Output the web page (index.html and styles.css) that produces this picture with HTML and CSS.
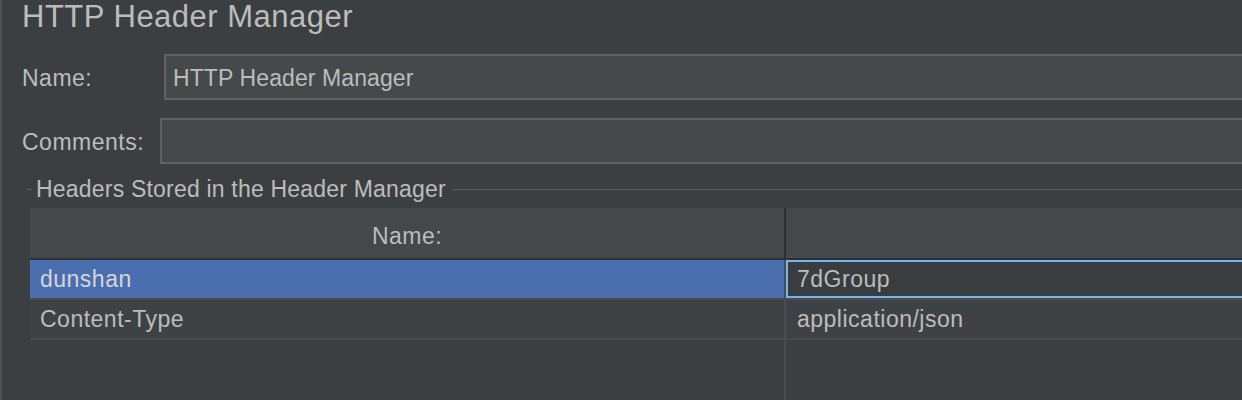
FILE: index.html
```html
<!DOCTYPE html>
<html>
<head>
<meta charset="utf-8">
<link rel="stylesheet" href="styles.css">
</head>
<body>
<div class="panel">
  <h1 class="title">HTTP Header Manager</h1>
  <div class="field-row name-row">
    <label class="label name-label">Name:</label>
    <div class="field">HTTP Header Manager</div>
  </div>
  <div class="field-row comments-row">
    <label class="label comments-label">Comments:</label>
    <div class="field"></div>
  </div>
  <div class="group">
    <div class="legend">
      <span class="dash"></span>
      <span class="legend-text">Headers Stored in the Header Manager</span>
      <span class="legend-line"></span>
    </div>
    <div class="table">
      <div class="thead">
        <div class="th">Name:</div>
        <div class="th-div"></div>
        <div class="th"></div>
      </div>
      <div class="tr selected">
        <div class="td sel">dunshan</div>
        <div class="vdiv"></div>
        <div class="td focus">7dGroup</div>
      </div>
      <div class="tr">
        <div class="td">Content-Type</div>
        <div class="vdiv"></div>
        <div class="td val">application/json</div>
      </div>
      <div class="filler">
        <div></div>
        <div class="vdiv"></div>
        <div></div>
      </div>
    </div>
  </div>
</div>
</body>
</html>
```
FILE: styles.css
```css
html, body {
  margin: 0;
  padding: 0;
  background: #3c3f41;
  overflow: hidden;
}
body {
  width: 1242px;
  height: 400px;
  font-family: "Liberation Sans", Arial, sans-serif;
  font-size: 23px;
  letter-spacing: 0.5px;
  color: #bcbcbc;
}
.panel {
  box-sizing: border-box;
  height: 400px;
  border-left: 2px solid #4e5052;
  padding-left: 20px;
  display: flex;
  flex-direction: column;
}
.title {
  margin: 0;
  font-weight: normal;
  font-size: 31px;
  letter-spacing: 0.5px;
  line-height: 34px;
  height: 34px;
  white-space: nowrap;
}
.field-row {
  display: flex;
  height: 46px;
}
.name-row { margin-top: 20px; }
.comments-row { margin-top: 18px; }
.label {
  padding-top: 2px;
  line-height: 44px;
  white-space: nowrap;
}
.name-label { width: 142px; flex: none; }
.comments-label { width: 138px; flex: none; }
.field {
  flex: 1;
  box-sizing: border-box;
  height: 46px;
  background: #45494a;
  border: 2px solid #5f6162;
  border-right: none;
  padding: 2px 0 0 7px;
  line-height: 40px;
  letter-spacing: 0.1px;
  white-space: nowrap;
}
.group {
  margin-top: 12px;
  flex: 1;
  display: flex;
  flex-direction: column;
  min-height: 0;
}
.legend {
  display: flex;
  align-items: center;
  height: 26px;
  line-height: 26px;
}
.dash {
  margin-left: 4px;
  width: 6px;
  height: 1px;
  background: #5a5c5e;
}
.legend-text {
  margin-left: 4px;
  white-space: nowrap;
  letter-spacing: 0.2px;
}
.legend-line {
  margin-left: 6px;
  flex: 1;
  height: 1px;
  background: #5a5c5e;
}
.table {
  margin-top: 6px;
  margin-left: 8px;
  flex: 1;
  display: flex;
  flex-direction: column;
}
.thead, .tr, .filler {
  display: grid;
  grid-template-columns: 754px 2px 1fr;
}
.thead {
  height: 50px;
  background: #45484a;
  border-bottom: 2px solid #2e3033;
}
.th {
  text-align: center;
  padding-top: 6px;
  line-height: 44px;
}
.th-div { background: #2e3033; }
.tr {
  height: 38px;
  background: #3f4244;
  border-bottom: 2px solid #4a4d4f;
}
.td {
  padding-left: 10px;
  line-height: 38px;
  white-space: nowrap;
}
.td.val { padding-left: 11px; }
.td.sel {
  background: #4b6eaf;
  color: #d6d6d6;
}
.td.focus {
  box-sizing: border-box;
  height: 38px;
  background: #3a3d40;
  border: 2px solid #74b6f0;
  border-right: none;
  padding-left: 9px;
  line-height: 34px;
}
.vdiv { background: #4a4d4f; }
.filler { flex: 1; }
```
